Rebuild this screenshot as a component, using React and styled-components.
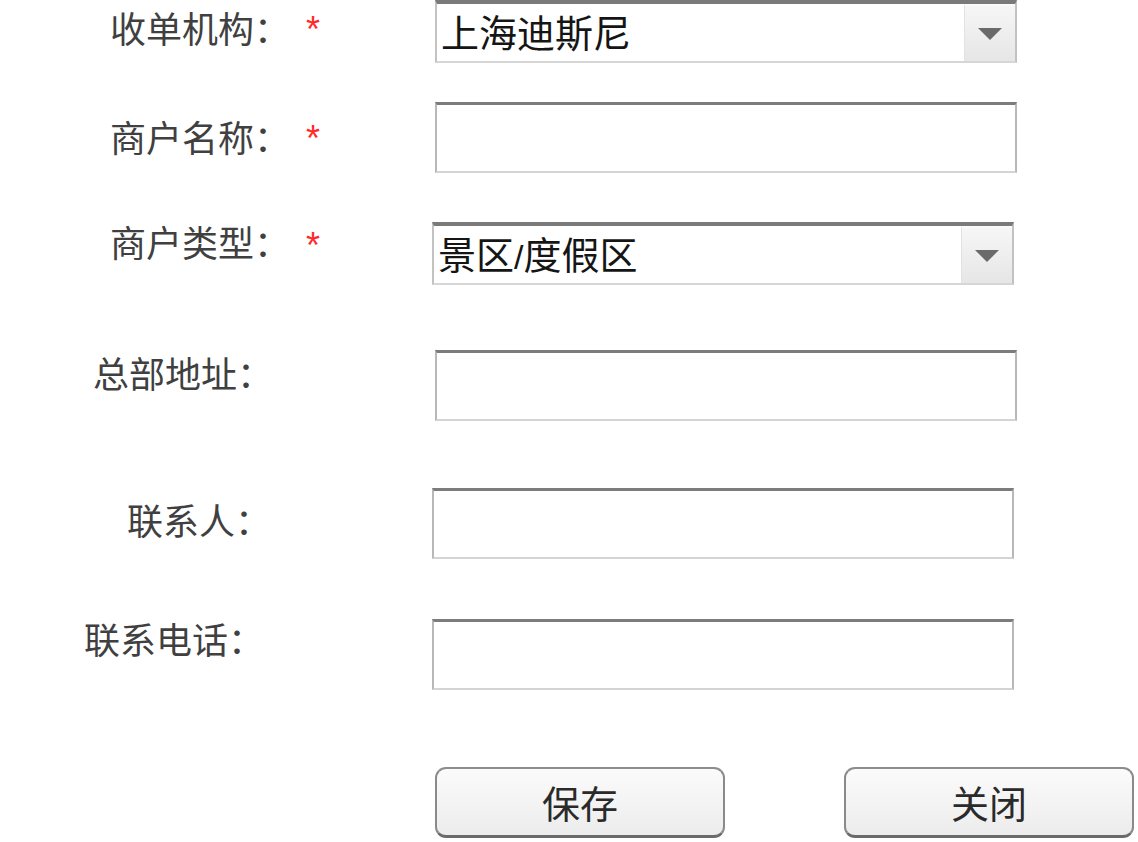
import React from "react";
import styled, { createGlobalStyle } from "styled-components";

const Global = createGlobalStyle`
  html, body { margin: 0; padding: 0; background: #ffffff; }
  body { font-family: "Noto Sans CJK SC", "Noto Sans", sans-serif; }
`;

const Form = styled.form`
  display: flex;
  flex-direction: column;
  width: 1138px;
  height: 842px;
  overflow: hidden;
`;

const Row = styled.div`
  display: flex;
  align-items: flex-start;
  margin-top: ${(p) => p.$gap}px;
`;

const LabelCell = styled.label`
  flex: none;
  box-sizing: border-box;
  width: 300px;
  padding-left: ${(p) => p.$indent}px;
  padding-top: ${(p) => p.$dy}px;
  font-size: 36px;
  line-height: 36px;
  color: #404040;
  white-space: nowrap;
`;

const StarCell = styled.span`
  flex: none;
  box-sizing: border-box;
  width: 132px;
  padding-left: 6px;
  padding-top: ${(p) => p.$dy}px;
  font-family: "Liberation Sans", Arial, sans-serif;
  font-size: 36px;
  line-height: 36px;
  color: #ff2a2a;
`;

const Field = styled.div`
  flex: none;
  box-sizing: border-box;
  width: 582px;
  margin-left: ${(p) => p.$shift}px;
`;

const TextBox = styled.input`
  display: block;
  box-sizing: border-box;
  width: 100%;
  height: 71px;
  margin: 0;
  padding: 0 8px;
  background: #ffffff;
  border-style: solid;
  border-width: 3px 2px 2px 2px;
  border-color: #7c7c7c #b8b8b8 #d4d4d4 #b8b8b8;
  font-family: "Noto Sans CJK SC", sans-serif;
  font-size: 36px;
  outline: none;
`;

const SelectBox = styled.div`
  display: flex;
  box-sizing: border-box;
  width: 100%;
  height: 63px;
  background: #ffffff;
  border-style: solid;
  border-width: 4px 2px 2px 2px;
  border-color: #7a7a7a #c2c2c2 #d6d6d6 #c2c2c2;
`;

const SelectValue = styled.div`
  flex: 1;
  padding-left: 4px;
  font-size: 38px;
  line-height: 54px;
  color: #151515;
  white-space: nowrap;
`;

const Slash = styled.span`
  font-family: "Liberation Sans", Arial, sans-serif;
  font-size: 34px;
`;

const ArrowPane = styled.div`
  flex: none;
  width: 50px;
  display: flex;
  align-items: center;
  justify-content: center;
  background: linear-gradient(#f6f6f6, #e6e6e6);
  border-left: 1px solid #e2e2e2;
  border-top: 2px solid #fafafa;
`;

const Arrow = () => (
  <svg width="26" height="14" viewBox="0 0 26 14">
    <path d="M1 1 H25 L13 13 Z" fill="#6a6a6a" />
  </svg>
);

const ButtonRow = styled.div`
  display: flex;
  margin-top: 77px;
  padding-left: 435px;
  gap: 119px;
`;

const Button = styled.button`
  box-sizing: border-box;
  width: 290px;
  height: 71px;
  border-style: solid;
  border-width: 2px 2px 3px 2px;
  border-color: #8c8c8c #8a8a8a #6a6a6a #8a8a8a;
  border-radius: 11px;
  background: linear-gradient(#fbfbfb, #ececec);
  font-family: "Noto Sans CJK SC", sans-serif;
  font-size: 38px;
  line-height: 1;
  color: #2a2a2a;
  padding: 0;
  cursor: pointer;
`;

const Select = ({ children }) => (
  <SelectBox>
    <SelectValue>{children}</SelectValue>
    <ArrowPane>
      <Arrow />
    </ArrowPane>
  </SelectBox>
);

export default function App() {
  return (
    <>
      <Global />
      <Form>
        <Row $gap={0}>
          <LabelCell $indent={110} $dy={9}>收单机构：</LabelCell>
          <StarCell $dy={12}>*</StarCell>
          <Field $shift={3}>
            <Select>上海迪斯尼</Select>
          </Field>
        </Row>
        <Row $gap={39}>
          <LabelCell $indent={110} $dy={16}>商户名称：</LabelCell>
          <StarCell $dy={19}>*</StarCell>
          <Field $shift={3}>
            <TextBox type="text" />
          </Field>
        </Row>
        <Row $gap={49}>
          <LabelCell $indent={110} $dy={1}>商户类型：</LabelCell>
          <StarCell $dy={6}>*</StarCell>
          <Field $shift={0}>
            <Select>
              景区<Slash>/</Slash>度假区
            </Select>
          </Field>
        </Row>
        <Row $gap={65}>
          <LabelCell $indent={93} $dy={4}>总部地址：</LabelCell>
          <StarCell $dy={0} />
          <Field $shift={3}>
            <TextBox type="text" />
          </Field>
        </Row>
        <Row $gap={67}>
          <LabelCell $indent={127} $dy={13}>联系人：</LabelCell>
          <StarCell $dy={0} />
          <Field $shift={0}>
            <TextBox type="text" />
          </Field>
        </Row>
        <Row $gap={60}>
          <LabelCell $indent={84} $dy={1}>联系电话：</LabelCell>
          <StarCell $dy={0} />
          <Field $shift={0}>
            <TextBox type="text" />
          </Field>
        </Row>
        <ButtonRow>
          <Button type="button">保存</Button>
          <Button type="button">关闭</Button>
        </ButtonRow>
      </Form>
    </>
  );
}
